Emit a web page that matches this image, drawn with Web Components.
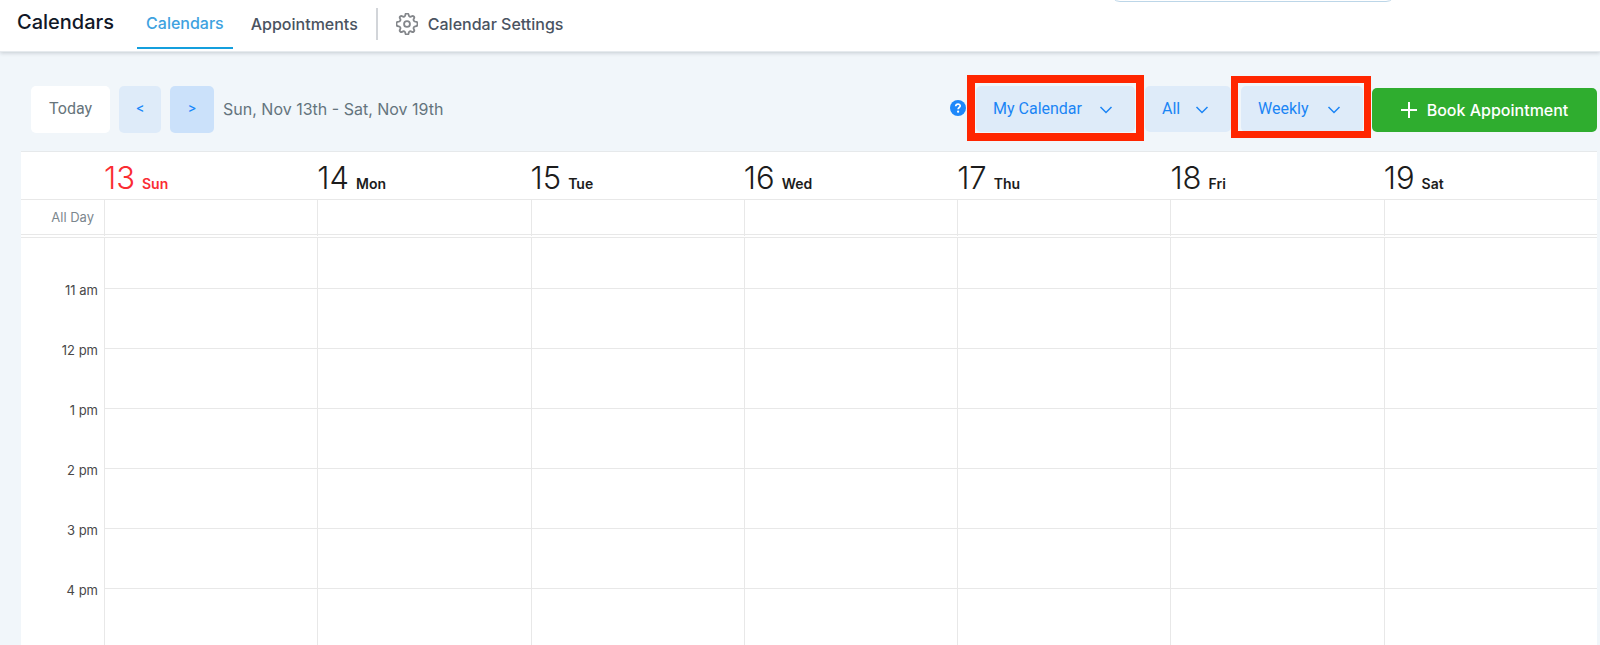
<!DOCTYPE html>
<html lang="en">
<head>
<meta charset="utf-8">
<meta name="viewport" content="width=device-width, initial-scale=1">
<title>Calendars</title>
<style>
  html, body { height: 100%; }
  body { margin: 0; background: #f1f6fa; font-family: Inter, "Liberation Sans", sans-serif; font-size: 16px; color: #2a3441; overflow: hidden; }
</style>
</head>
<body>
<calendar-app></calendar-app>
<script>
const define = (name, html, setup) => {
  const template = document.createElement('template');
  template.innerHTML = html;
  customElements.define(name, class extends HTMLElement {
    constructor() {
      super();
      this.attachShadow({ mode: 'open' }).append(template.content.cloneNode(true));
    }
    connectedCallback() { if (setup) setup(this, this.shadowRoot); }
  });
};

define('nav-tab', `
<style>
  :host { display: flex; }
  a { display: flex; align-items: center; gap: 10px; box-sizing: border-box; padding: 0 9px; border-bottom: 2px solid transparent;
      color: #4a5361; font-weight: 500; line-height: 20px; text-decoration: none; white-space: nowrap; }
  :host([current]) a { color: #3ea2df; border-color: #149fdd; padding-bottom: 2px; }
</style>
<a href="#"><slot name="icon"></slot><slot></slot></a>`,
(host, root) => { if (host.hasAttribute('current')) root.querySelector('a').setAttribute('aria-current', 'page'); });

define('app-header', `
<style>
  :host { display: flex; position: relative; z-index: 1; box-sizing: border-box; height: 52px; padding: 0 17px; background: #fff;
          border-bottom: 1px solid #e6eaee; box-shadow: 0 1px 4px rgba(40, 55, 70, .22); }
  h1 { margin: 0 23px 0 0; font-size: 20px; font-weight: 500; line-height: 44px; color: #111827; }
  nav { display: flex; height: 49px; gap: 9px; }
  .rule { width: 2px; height: 32px; margin: 8px 0 0; background: #d2d5d9; }
  svg { width: 22px; height: 22px; fill: none; stroke: #84878b; stroke-width: 2; stroke-linejoin: round; }
  input { position: absolute; top: -38px; right: 204px; box-sizing: border-box; width: 286px; height: 40px;
          border: 1px solid #bcd6e8; border-radius: 10px; background: #fff; }
</style>
<h1>Calendars</h1>
<nav aria-label="Sections">
  <nav-tab current>Calendars</nav-tab>
  <nav-tab>Appointments</nav-tab>
  <span class="rule"></span>
  <nav-tab><svg slot="icon" viewBox="1 1 24 24" aria-hidden="true"><path d="M11.2 3.2a1.8 1.8 0 0 1 3.6 0c.2 1.700 1.900 2.400 3.300 1.400a1.800 1.800 0 0 1 2.500 2.500c-1 1.400-.3 3.100 1.400 3.300a2 2 0 0 1 0 5.200c-1.700.2-2.400 1.900-1.400 3.300a1.800 1.800 0 0 1-2.500 2.500c-1.400-1-3.100-.3-3.300 1.400a1.800 1.800 0 0 1-3.600 0c-.2-1.700-1.900-2.400-3.300-1.400a1.800 1.800 0 0 1-2.500-2.500c1-1.400.3-3.100-1.400-3.300a2 2 0 0 1 0-5.200c1.700-.2 2.400-1.900 1.400-3.300a1.800 1.800 0 0 1 2.500-2.500c1.400 1 3.100.3 3.300-1.400z"/><circle cx="13" cy="13" r="3.200"/></svg>Calendar Settings</nav-tab>
</nav>
<input type="search" aria-label="Search">`);

define('soft-button', `
<style>
  :host { display: flex; }
  button { min-width: 42px; height: 47px; padding: 0 18px 2px; border: 0; border-radius: 5px; background: #deebf9; color: #1a88fb;
           font: 400 16px Roboto, "Liberation Sans", sans-serif; }
  :host([tone="plain"]) button { min-width: 79px; background: #fff; color: #66747b; }
  :host([tone="strong"]) button { background: #cbe1fa; min-width: 44px; }
  :host(:not([tone="plain"])) button { padding: 0 0 3px; font: 500 13px Inter, sans-serif; }
</style>
<button type="button"><slot></slot></button>`,
(host, root) => { if (host.dataset.label) root.querySelector('button').setAttribute('aria-label', host.dataset.label); });

define('drop-down', `
<style>
  :host { display: flex; position: relative; height: 46px; }
  label { display: grid; width: 100%; align-items: center; }
  select { grid-area: 1 / 1; width: 100%; height: 46px; padding: 0 17px 2px; border: 0; border-radius: 5px; appearance: none;
           background: #deebf9; color: #1a85f5; font: 400 16px Roboto, "Liberation Sans", sans-serif; }
  svg { grid-area: 1 / 1; justify-self: end; width: 14px; height: 14px; margin-right: 22px; fill: none; stroke: #1a85f5; stroke-width: 1.500; pointer-events: none; }
  :host([marked])::after { content: ""; position: absolute; z-index: 2; inset: -11px -9px -9px; border: 8px solid #ff2600; pointer-events: none; }
  :host([marked="small"])::after { inset: -10px -8px -6px -10px; border-width: 7px; }
</style>
<label><select><option></option></select>
<svg viewBox="0 0 14 14" aria-hidden="true"><path d="M1.500 5l5.500 5.500L12.500 5"/></svg></label>`,
(host, root) => {
  root.querySelector('option').textContent = host.dataset.value;
  root.querySelector('select').setAttribute('aria-label', host.dataset.label);
});

define('calendar-toolbar', `
<style>
  :host { display: flex; align-items: flex-start; justify-content: space-between; padding: 34px 3px 18px 31px; }
  div { display: flex; align-items: center; }
  .range { gap: 9px; color: #64747d; }
  .range span { padding-bottom: 2px; }
  .my { width: 159px; margin: 0 10px 0 10px; }
  .all { width: 86px; margin-right: 10px; }
  .weekly { width: 122px; margin-right: 9px; }
  .help { display: flex; padding: 0; border: 0; background: none; }
  .help svg { width: 16px; height: 16px; margin-bottom: 2px; }
  .book { display: flex; align-items: center; justify-content: center; gap: 10px; width: 225px; height: 44px; margin-top: 2px; padding: 0;
          border: 0; border-radius: 5px; background: #2fad2f; color: #fff; font: 500 16px Inter, "Liberation Sans", sans-serif; }
  .book svg { width: 16px; height: 16px; stroke: #fff; stroke-width: 2; }
</style>
<div class="range">
  <soft-button tone="plain">Today</soft-button>
  <soft-button data-label="Previous week">&lt;</soft-button>
  <soft-button tone="strong" data-label="Next week">&gt;</soft-button>
  <span>Sun, Nov 13th - Sat, Nov 19th</span>
</div>
<div>
  <button class="help" type="button" aria-label="Help"><svg viewBox="0 0 16 16"><circle cx="8" cy="8" r="8" fill="#1e88fa"/><path d="M5.700 6.200C5.900 3.400 10.300 3.500 10.200 6c0 1.500-2.100 1.500-2.100 3.200" fill="none" stroke="#fff" stroke-width="1.700"/><circle cx="8.100" cy="11.700" r="1.100" fill="#fff"/></svg></button>
  <drop-down class="my" marked data-label="Calendar" data-value="My Calendar"></drop-down>
  <drop-down class="all" data-label="Filter" data-value="All"></drop-down>
  <drop-down class="weekly" marked="small" data-label="View" data-value="Weekly"></drop-down>
  <button class="book" type="button"><svg viewBox="0 0 16 16" aria-hidden="true"><path d="M8 0v16M0 8h16"/></svg>Book Appointment</button>
</div>`);

define('week-grid', `
<style>
  :host { display: block; margin: 0 3px 0 21px; background: #fff; border-top: 1px solid #e6e9eb; }
  table { width: 100%; table-layout: fixed; border-collapse: separate; border-spacing: 0; }
  col.times { width: 83px; }
  th, td { box-sizing: border-box; padding: 0; border: 0 solid #e8e8e8; font-weight: 400; }
  td { border-left-width: 1px; }
  thead th, thead td { height: 48px; border-left-width: 0; border-bottom-width: 1px; text-align: left; vertical-align: top; white-space: nowrap;
             color: #1c1c1c; font-size: 14px; font-weight: 600; line-height: 28px; }
  thead th { padding-top: 12px; }
  thead b { margin-right: 7px; font-size: 31px; font-weight: 300; }
  thead .today { color: #fa2c32; }
  .allday th, .allday td { height: 38px; border-bottom: 4px double #e8e8e8; }
  .allday th { padding-right: 10px; text-align: right; color: #7c878e; font-size: 13px; }
  .lead td { height: 50px; }
  .hour th, .hour td { height: 60px; vertical-align: top; }
  .hour td { border-top-width: 1px; }
  .hour th { padding-right: 6px; text-align: right; font-size: 13px; line-height: 20px; color: #494949; }
  .hour span { display: block; margin-top: -8px; }
</style>
<table>
  <colgroup><col class="times"><col span="7"></colgroup>
  <thead><tr></tr></thead>
  <tbody></tbody>
</table>`,
(host, root) => {
  const days = ['Sun', 'Mon', 'Tue', 'Wed', 'Thu', 'Fri', 'Sat'];
  const cells = '<td></td>'.repeat(7);
  root.querySelector('thead tr').innerHTML = '<td></td>' + days.map((day, i) =>
    `<th scope="col"${i ? '' : ' class="today"'}><b>${13 + i}</b>${day}</th>`).join('');
  root.querySelector('tbody').innerHTML =
    `<tr class="allday"><th scope="row">All Day</th>${cells}</tr><tr class="lead"><th></th>${cells}</tr>` +
    ['11 am', '12 pm', '1 pm', '2 pm', '3 pm', '4 pm'].map(t =>
      `<tr class="hour"><th scope="row"><span>${t}</span></th>${cells}</tr>`).join('');
});

define('calendar-app', `
<style>:host { display: block; height: 100%; overflow: hidden; }</style>
<app-header></app-header>
<main>
  <calendar-toolbar></calendar-toolbar>
  <week-grid></week-grid>
</main>`);
</script>
</body>
</html>
